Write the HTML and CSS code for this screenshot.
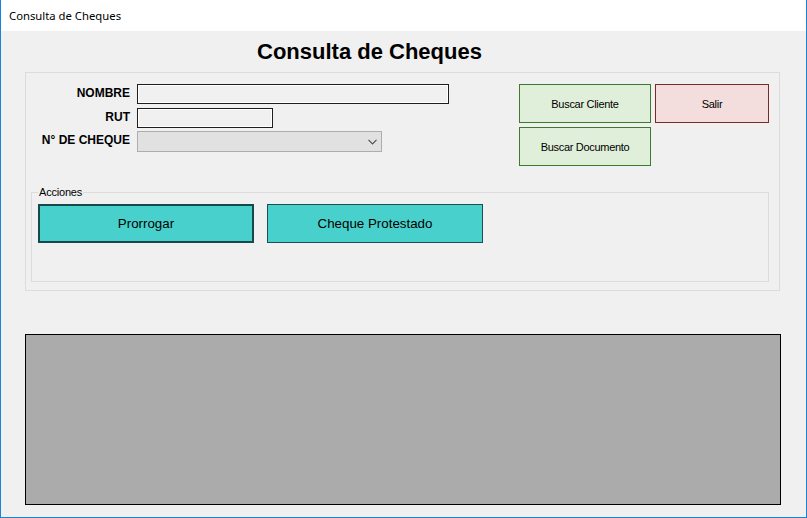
FILE: index.html
```html
<!DOCTYPE html>
<html lang="es">
<head>
<meta charset="utf-8">
<title>Consulta de Cheques</title>
<link rel="stylesheet" href="styles.css">
</head>
<body>
<div class="window">
  <div class="titlebar">Consulta de Cheques</div>
  <div class="content">
    <h1 class="heading">Consulta de Cheques</h1>
    <div class="group">
      <div class="top">
        <div class="form">
          <label class="lbl">NOMBRE</label>
          <div class="textbox wide"></div>
          <label class="lbl">RUT</label>
          <div class="textbox short"></div>
          <label class="lbl">N° DE CHEQUE</label>
          <div class="combo">
            <svg class="chev" width="9" height="6" viewBox="0 0 9 6"><path d="M0.5 0.8 L4.5 4.8 L8.5 0.8" fill="none" stroke="#505050" stroke-width="1.2"/></svg>
          </div>
        </div>
        <div class="btns">
          <button class="btn green">Buscar Cliente</button>
          <button class="btn red">Salir</button>
          <button class="btn green">Buscar Documento</button>
        </div>
      </div>
      <fieldset class="acciones">
        <legend>Acciones</legend>
        <div class="actions">
          <button class="abtn focused">Prorrogar</button>
          <button class="abtn">Cheque Protestado</button>
        </div>
      </fieldset>
    </div>
    <div class="panel"></div>
  </div>
</div>
</body>
</html>
```
FILE: styles.css
```css
* { box-sizing: border-box; }
html, body { margin: 0; padding: 0; }
body { background: #f0f0f0; font-family: "Liberation Sans", Arial, sans-serif; }
.window {
  width: 807px; height: 518px;
  border: 1px solid #1883d7; border-top: none;
  background: #f0f0f0;
  display: flex; flex-direction: column;
}
.titlebar {
  height: 31px; background: #fff;
  padding-left: 8px;
  font-family: "Noto Sans", "Segoe UI", sans-serif;
  font-size: 11.3px; line-height: 31px; color: #000;
}
.content { padding-left: 24px; display: flex; flex-direction: column; }
.heading {
  margin: 0 0 0 232px; height: 41px; line-height: 41px;
  font-size: 22px; font-weight: bold; color: #000;
}
.group {
  width: 755px; border: 1px solid #dcdcdc;
  padding: 11px 10px 8px 0;
}
.top { display: flex; justify-content: space-between; align-items: flex-start; }
.form {
  display: grid; grid-template-columns: 104px auto;
  grid-template-rows: 24px 23px 21px; column-gap: 7px;
  align-items: start;
}
.lbl { font-size: 12px; font-weight: bold; line-height: 18px; text-align: right; color: #000; }
.textbox {
  height: 20px; border: 1px solid #1e1e1e;
  box-shadow: inset 0 0 0 1px #fff; background: #f0f0f0;
}
.wide { width: 312px; }
.short { width: 136px; }
.combo {
  width: 245px; height: 21px; border: 1px solid #adadad; background: #e1e1e1;
  display: flex; align-items: center; justify-content: flex-end; padding-right: 4px;
}
.chev { display: block; }
.btns { display: grid; grid-template-columns: 132px 114px; grid-auto-rows: 39px; gap: 4px; }
.btn {
  margin: 0; padding: 0; font-family: "Liberation Sans", Arial, sans-serif;
  font-size: 11px; letter-spacing: -0.3px; color: #000;
}
.green { background: #dfefda; border: 1px solid #3e7a2e; }
.red { background: #f3dddd; border: 1px solid #7b2a2a; }
.acciones {
  margin: 20px 0 0 5px; width: 738px; min-width: 0;
  border: 1px solid #dcdcdc; padding: 5px 0 38px 6px;
}
.acciones legend {
  margin-left: 0; padding: 0 1px; font-size: 11px; line-height: 13px;
  letter-spacing: -0.2px; color: #000;
}
.actions { display: flex; gap: 13px; }
.abtn {
  margin: 0; padding: 0; width: 216px; height: 39px;
  background: #48d1cc; border: 1px solid #1c4e4e;
  font-family: "Liberation Sans", Arial, sans-serif; font-size: 13.33px; color: #000;
}
.abtn.focused { border: 2px solid #17494a; }
.panel {
  margin-top: 43px; width: 756px; height: 171px;
  background: #ababab; border: 1px solid #000;
}
```
